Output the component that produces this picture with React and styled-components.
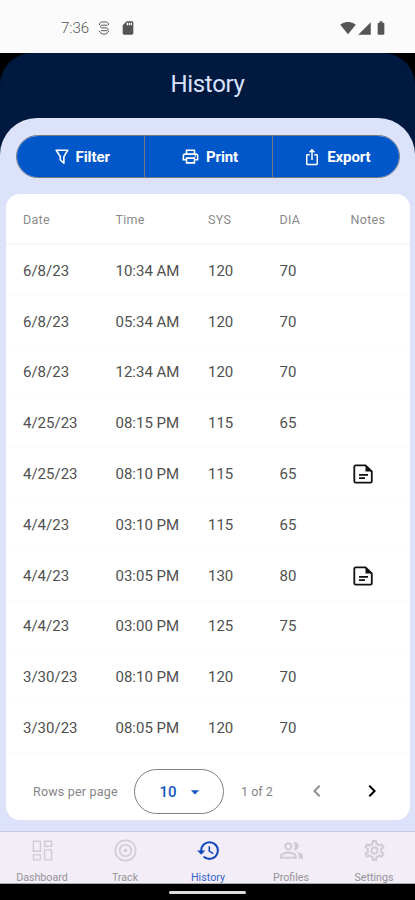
import React from "react";
import styled, { createGlobalStyle } from "styled-components";
import {
  MdArrowDropDown,
  MdBatteryFull,
  MdChevronLeft,
  MdChevronRight,
  MdHistory,
  MdIosShare,
  MdOutlinePeopleAlt,
  MdOutlinePrint,
  MdOutlineSettings,
  MdSdCard,
  MdSignalCellular4Bar,
  MdSignalWifi4Bar,
} from "react-icons/md";

const GlobalStyle = createGlobalStyle`
  * {
    box-sizing: border-box;
  }

  body {
    margin: 0;
    background: #000;
    font-family: Roboto, "Liberation Sans", sans-serif;
  }

  svg {
    display: block;
    flex-shrink: 0;
  }
`;

const Screen = styled.div`
  width: 415px;
  height: 900px;
  display: flex;
  flex-direction: column;
  overflow: hidden;
  background: #000;
`;

const StatusBar = styled.div`
  height: 53px;
  padding: 3px 26px 0 61px;
  display: flex;
  align-items: center;
  background: #fbfbfb;
  color: #555;
`;

const Clock = styled.span`
  width: 37px;
  font-size: 15px;
  font-weight: 300;
  color: #555;
`;

const StatusIcons = styled.div`
  display: flex;
  align-items: center;
  gap: ${(props) => props.$gap};
  margin-left: ${(props) => props.$push || 0};
`;

const AppBody = styled.div`
  flex: 1;
  display: flex;
  flex-direction: column;
  border-radius: 32px 32px 0 0;
  background: #00193f;
`;

const Header = styled.header`
  height: 65px;
  padding-bottom: 4px;
  display: flex;
  align-items: center;
  justify-content: center;
`;

const Title = styled.h1`
  margin: 0;
  font-size: 24px;
  font-weight: 400;
  line-height: 28px;
  letter-spacing: -0.3px;
  color: #dae2ff;
`;

const Panel = styled.main`
  flex: 1;
  padding: 17px 5px 11px 6px;
  display: flex;
  flex-direction: column;
  border-radius: 37px 37px 0 0;
  background: #dbe2f9;
`;

const Toolbar = styled.div`
  height: 43px;
  margin: 0 10px 16px;
  display: grid;
  grid-template-columns: repeat(3, 1fr);
  border: 1px solid #75777f;
  border-radius: 22px;
  overflow: hidden;
`;

const ToolButton = styled.button`
  padding: 0 0 0 2px;
  display: flex;
  align-items: center;
  justify-content: center;
  gap: 6px;
  border: 0;
  background: #0057c9;
  color: #fff;
  font-family: inherit;
  font-size: 15px;
  font-weight: 700;
  letter-spacing: -0.1px;

  & + & {
    border-left: 1px solid #75777f;
  }
`;

const Card = styled.section`
  flex: 1;
  display: flex;
  flex-direction: column;
  border-radius: 14px;
  background: #fff;
`;

const Row = styled.div`
  height: 50.8px;
  padding: 2px 0 0 17px;
  display: grid;
  grid-template-columns: 92.5px 92.5px 71.5px 71px 1fr;
  align-items: center;
  font-size: 15px;
  color: #505050;
  border-bottom: 1px solid #fbfbfb;
`;

const HeadRow = styled(Row)`
  height: 51px;
  font-size: 12.5px;
  letter-spacing: 0.3px;
  color: #8a8a8a;
  border-bottom: 2px solid #f7f7f7;
`;

const NoteCell = styled.span`
  color: #111;
`;

const Pagination = styled.div`
  flex: 1;
  padding: 10px 0 0 27px;
  display: flex;
  align-items: center;
  font-size: 12.5px;
  color: #858585;

  & > * {
    flex-shrink: 0;
  }
`;

const RowsLabel = styled.span`
  width: 101px;
  letter-spacing: 0.2px;
`;

const RowsSelect = styled.button`
  width: 90px;
  height: 45px;
  margin-right: 17px;
  padding: 2px 0 0 6px;
  display: flex;
  align-items: center;
  justify-content: center;
  gap: 8px;
  border: 1px solid #808080;
  border-radius: 23px;
  background: #fff;
  color: #1656c4;
  font-family: inherit;
  font-size: 15px;
  font-weight: 500;
`;

const PageCount = styled.span`
  width: 64px;
`;

const PageButton = styled.button`
  width: 24px;
  margin-right: 31px;
  padding: 0;
  border: 0;
  background: none;
  color: ${(props) => (props.disabled ? "#8f8f8f" : "#000")};
`;

const BottomNav = styled.nav`
  height: 53px;
  padding-top: 6px;
  display: grid;
  grid-template-columns: repeat(5, 1fr);
  border-top: 1px solid #c9cbdc;
  border-bottom: 1px solid #aaa;
  background: #f2edf6;
  overflow: hidden;
`;

const NavItem = styled.div`
  padding-left: 1px;
  display: flex;
  flex-direction: column;
  align-items: center;
  gap: 8px;
  font-size: 10.7px;
  line-height: 13px;
  color: ${(props) => (props.$active ? "#3563cc" : "#969399")};

  svg {
    color: ${(props) => (props.$active ? "#1149bd" : "#d0ccd3")};
  }
`;

const GestureBar = styled.div`
  height: 16px;
  padding-top: 7px;
  display: flex;
  justify-content: center;
`;

const GestureHandle = styled.div`
  width: 77px;
  height: 3px;
  border-radius: 2px;
  background: #ddd;
`;

const FilterIcon = () => (
  <svg width="16" height="18" viewBox="0 0 16 18" fill="none" stroke="currentColor" strokeWidth="1.6">
    <path d="M2.2 2.2h11.6L9.9 8.6v6.6L6.3 12V8.6z" strokeLinejoin="round" />
  </svg>
);

const DashboardIcon = () => (
  <svg width="25" height="25" viewBox="0 0 25 25" fill="none" stroke="currentColor" strokeWidth="1.4">
    <path d="M3.4 3.2h7v10h-7zM14.6 3.2h7v5h-7zM3.4 16.9h7v5h-7zM14.6 11.9h7v10h-7z" />
  </svg>
);

const TargetIcon = () => (
  <svg width="25" height="25" viewBox="0 0 24 24" fill="none" stroke="currentColor" strokeWidth="1.5">
    <circle cx="12" cy="12" r="9.8" />
    <circle cx="12" cy="12" r="5.6" />
    <circle cx="12" cy="12" r="1.7" fill="currentColor" stroke="none" />
  </svg>
);

const NoteIcon = () => (
  <svg width="24" height="24" viewBox="0 0 24 24" fill="none" stroke="currentColor">
    <path
      d="M14.5 3.4H4.6a1.3 1.3 0 0 0-1.3 1.3v14.6a1.3 1.3 0 0 0 1.3 1.3h14.9a1.3 1.3 0 0 0 1.3-1.3V9.5L14.5 3.4z"
      strokeWidth="1.8"
      strokeLinejoin="round"
    />
    <path d="M14.5 3v6.5H21z" fill="currentColor" stroke="none" />
    <path d="M8 12.8h9M8 16.1h6" strokeWidth="1.7" />
  </svg>
);

// Status bar "S" inside a broken ring
const SyncIcon = () => (
  <svg width="12" height="14" viewBox="0 0 12 14" fill="none" stroke="currentColor" strokeWidth="1">
    <path d="M1.5 4V2.4C2.4 1.2 4 .9 6 .9s3.6.3 4.5 1.5V4M1.2 9.7C2 12 3.8 13.1 6 13.1s4-1.1 4.8-3.4" />
    <path d="M9.5 4.2H4c-2 0-2 2.7 0 2.7h4.4c2 0 2 2.8 0 2.8H3" />
  </svg>
);

const readings = [
  { date: "6/8/23", time: "10:34 AM", sys: 120, dia: 70 },
  { date: "6/8/23", time: "05:34 AM", sys: 120, dia: 70 },
  { date: "6/8/23", time: "12:34 AM", sys: 120, dia: 70 },
  { date: "4/25/23", time: "08:15 PM", sys: 115, dia: 65 },
  { date: "4/25/23", time: "08:10 PM", sys: 115, dia: 65, note: true },
  { date: "4/4/23", time: "03:10 PM", sys: 115, dia: 65 },
  { date: "4/4/23", time: "03:05 PM", sys: 130, dia: 80, note: true },
  { date: "4/4/23", time: "03:00 PM", sys: 125, dia: 75 },
  { date: "3/30/23", time: "08:10 PM", sys: 120, dia: 70 },
  { date: "3/30/23", time: "08:05 PM", sys: 120, dia: 70 },
];

const navItems = [
  { label: "Dashboard", icon: <DashboardIcon /> },
  { label: "Track", icon: <TargetIcon /> },
  { label: "History", icon: <MdHistory size={25} />, active: true },
  { label: "Profiles", icon: <MdOutlinePeopleAlt size={25} /> },
  { label: "Settings", icon: <MdOutlineSettings size={25} /> },
];

const App = () => {
  return (
    <Screen>
      <GlobalStyle />
      <StatusBar>
        <Clock>7:36</Clock>
        <StatusIcons $gap="10px">
          <SyncIcon />
          <MdSdCard size={16} />
        </StatusIcons>
        <StatusIcons $gap="1px" $push="auto">
          <MdSignalWifi4Bar size={16} />
          <MdSignalCellular4Bar size={15} />
          <MdBatteryFull size={16} />
        </StatusIcons>
      </StatusBar>
      <AppBody>
        <Header>
          <Title>History</Title>
        </Header>
        <Panel>
          <Toolbar>
            <ToolButton>
              <FilterIcon />
              Filter
            </ToolButton>
            <ToolButton>
              <MdOutlinePrint size={19} />
              Print
            </ToolButton>
            <ToolButton>
              <MdIosShare size={18} />
              Export
            </ToolButton>
          </Toolbar>
          <Card>
            <HeadRow>
              <span>Date</span>
              <span>Time</span>
              <span>SYS</span>
              <span>DIA</span>
              <span>Notes</span>
            </HeadRow>
            {readings.map((item) => (
              <Row key={item.date + item.time}>
                <span>{item.date}</span>
                <span>{item.time}</span>
                <span>{item.sys}</span>
                <span>{item.dia}</span>
                <NoteCell>{item.note && <NoteIcon />}</NoteCell>
              </Row>
            ))}
            <Pagination>
              <RowsLabel>Rows per page</RowsLabel>
              <RowsSelect>
                10
                <MdArrowDropDown size={20} />
              </RowsSelect>
              <PageCount>1 of 2</PageCount>
              <PageButton disabled>
                <MdChevronLeft size={24} />
              </PageButton>
              <PageButton>
                <MdChevronRight size={24} />
              </PageButton>
            </Pagination>
          </Card>
        </Panel>
      </AppBody>
      <BottomNav>
        {navItems.map((item) => (
          <NavItem key={item.label} $active={item.active}>
            {item.icon}
            {item.label}
          </NavItem>
        ))}
      </BottomNav>
      <GestureBar>
        <GestureHandle />
      </GestureBar>
    </Screen>
  );
};

export default App;
